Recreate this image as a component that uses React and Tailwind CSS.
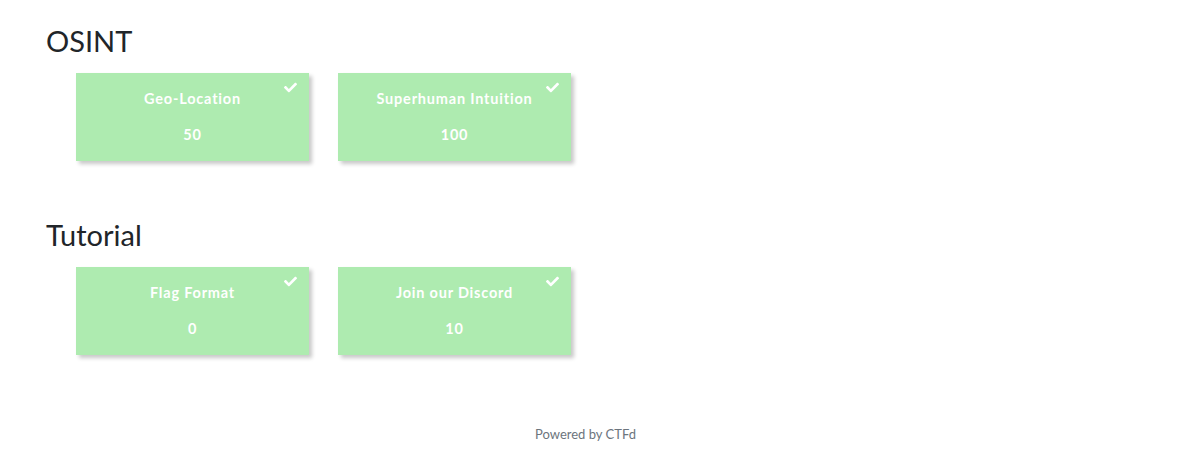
import { FaCheck } from 'react-icons/fa'

const categories = [
  {
    name: 'OSINT',
    challenges: [
      { name: 'Geo-Location', value: 50 },
      { name: 'Superhuman Intuition', value: 100 },
    ],
  },
  {
    name: 'Tutorial',
    challenges: [
      { name: 'Flag Format', value: 0 },
      { name: 'Join our Discord', value: 10 },
    ],
  },
]

const ChallengeCard = ({ challenge }) => (
  <button className="relative w-[233px] h-[88px] bg-[#aeebb0] shadow-[3px_3px_4px_rgba(0,0,0,0.22)] flex flex-col items-center text-white font-bold text-[14.5px] tracking-[0.8px] cursor-pointer">
    <FaCheck className="absolute top-[8px] right-[12px] w-[13px] h-[13px] text-white" />
    <span className="mt-[16px] leading-[20px]">{challenge.name}</span>
    <span className="mt-[16px] leading-[20px]">{challenge.value}</span>
  </button>
)

export default function App() {
  return (
    <div className="min-h-[453px] bg-white flex flex-col font-['Lato','Liberation_Sans',sans-serif] text-[#212529]">
      <main className="pl-[46px] pt-[24px]">
        {categories.map((cat, i) => (
          <section key={cat.name} className={i > 0 ? 'mt-[57px]' : ''}>
            <h3 className="text-[29px] leading-[34px] font-normal">{cat.name}</h3>
            <div className="flex gap-[29px] pl-[30px] mt-[15px]">
              {cat.challenges.map((c) => (
                <ChallengeCard key={c.name} challenge={c} />
              ))}
            </div>
          </section>
        ))}
      </main>
      <footer className="mt-[70px] pr-[6px] text-center text-[13px] text-[#6c757d]">
        Powered by CTFd
      </footer>
    </div>
  )
}
